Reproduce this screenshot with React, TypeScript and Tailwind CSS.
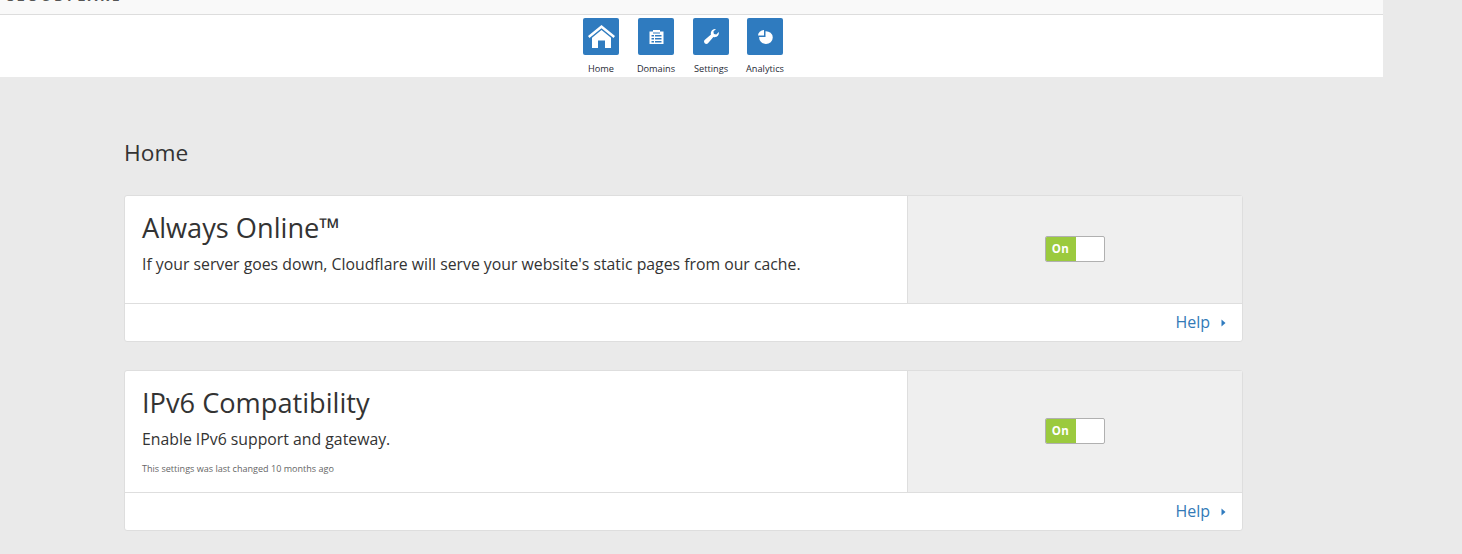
import React from "react";

const font = { fontFamily: '"Open Sans", "Liberation Sans", sans-serif' };

function Caret() {
  return (
    <svg width="5" height="8" viewBox="0 0 5 8" className="ml-[11px] mt-[1px]">
      <path d="M0.5 0.5 L4.5 4 L0.5 7.5 Z" fill="#2f7bbf" />
    </svg>
  );
}

function Toggle() {
  return (
    <div className="flex w-[60px] h-[26px] rounded-[2px] border border-[#b0b0b0] bg-white overflow-hidden">
      <div className="w-[31px] -ml-px -my-px h-[26px] pt-[1px] bg-[#9bca3e] text-white text-[11.5px] font-bold flex items-center justify-center tracking-[0.3px] rounded-l-[2px]">
        On
      </div>
    </div>
  );
}

function Card({ title, desc, note, mainH, toggleY }: { title: string; desc: string; note?: string; mainH: string; toggleY: string }) {
  return (
    <section className="w-[1119px] rounded-[3px] border border-[#dedede] bg-white">
      <div className={`flex ${mainH}`}>
        <div className="w-[783px] border-r border-[#dedede] pl-[17px] pt-[13px]">
          <h2 className="text-[27.2px] leading-[38px] text-[#333333]">{title}</h2>
          <p className="mt-[7px] text-[15.8px] leading-[20px] text-[#333333]">{desc}</p>
          {note && <p className="mt-[14px] text-[9.05px] leading-[12px] text-[#666666]">{note}</p>}
        </div>
        <div className={`flex-1 bg-[#efefef] flex items-center justify-center ${toggleY}`}>
          <Toggle />
        </div>
      </div>
      <div className="h-[38px] border-t border-[#dedede] flex items-center justify-end pr-[16px] text-[#337ab7]">
        <span className="text-[16px] leading-[20px] -mt-[1px]">Help</span>
        <Caret />
      </div>
    </section>
  );
}

function Nav({ label, w, children }: { label: string; w: string; children: React.ReactNode }) {
  return (
    <div className={`flex flex-col items-center ${w}`}>
      <div className="w-[36px] h-[37px] rounded-[2px] bg-[#2f7bbf] flex items-center justify-center">{children}</div>
      <span className="mt-[7px] text-[9.2px] leading-[13px] text-[#1f2a36] whitespace-nowrap">{label}</span>
    </div>
  );
}

export default function App() {
  return (
    <div style={font} className="w-[1462px] h-[554px] overflow-hidden bg-[#eaeaea]">
      <header className="w-[1383px] h-[77px] bg-white">
        <div className="h-[15px] bg-[#f9f9f9] border-b border-[#dddddd] overflow-hidden pl-[5px]">
          <div className="-mt-[11px] text-[14px] leading-[14px] font-bold tracking-[2.6px] text-[#555555]">CLOUDFLARE</div>
        </div>
        <nav className="flex justify-center pt-[3px] pr-[17px] h-[62px]">
          <Nav label="Home" w="w-[54px]">
            <svg width="27" height="23" viewBox="0 0 27 23" fill="white">
              <path d="M13.5 0 L27 11 L25.5 13 L13.5 3.2 L1.5 13 L0 11 Z" />
              <path d="M13.5 5 L23 12.8 V23 H17 V15.5 H10 V23 H4 V12.8 Z" />
            </svg>
          </Nav>
          <Nav label="Domains" w="w-[56px]">
            <svg width="15" height="14" viewBox="0 0 15 14">
              <path fill="white" d="M0.5 1.5 H4 V0 H11 V1.5 H14.5 V14 H0.5 Z" />
              <path fill="#2f7bbf" d="M4 2.6 H11 V3.4 H4 Z M2.5 5 H5 V6.5 H2.5 Z M6 5 H12.5 V6.5 H6 Z M2.5 8 H5 V9.5 H2.5 Z M6 8 H12.5 V9.5 H6 Z M2.5 11 H5 V12.5 H2.5 Z M6 11 H12.5 V12.5 H6 Z" />
            </svg>
          </Nav>
          <Nav label="Settings" w="w-[54px]">
            <svg width="15" height="15" viewBox="0 0 15 15" fill="white">
              <path d="M14.8 3 C15.3 5.4 13.7 7.8 11.2 8.1 C10.6 8.2 10 8.1 9.4 7.9 L4.2 14 C3.3 15.1 1.7 15.2 0.7 14.2 C-0.3 13.2 -0.2 11.6 0.9 10.8 L7 5.6 C6.8 5 6.7 4.2 6.9 3.5 C7.4 1.2 9.6 -0.4 12 0.1 L9.4 2.6 L9.9 5 L12.3 5.5 Z" />
            </svg>
          </Nav>
          <Nav label="Analytics" w="w-[54px]">
            <svg width="15" height="14" viewBox="0 0 15 14" fill="white">
              <path d="M7.5 1.2 A6.8 6.4 0 1 1 1.2 7 H7.5 Z" />
              <path d="M6 0 V5.6 H0 A6 5.6 0 0 1 6 0 Z" />
            </svg>
          </Nav>
        </nav>
      </header>
      <main className="pl-[124px] pt-[61px]">
        <h1 className="text-[22.7px] leading-[30px] text-[#333333]">Home</h1>
        <div className="mt-[27px] flex flex-col gap-[28px]">
          <Card
            title="Always Online™"
            desc="If your server goes down, Cloudflare will serve your website's static pages from our cache."
            mainH="h-[107px]"
            toggleY="pb-[2px]"
          />
          <Card
            title="IPv6 Compatibility"
            desc="Enable IPv6 support and gateway."
            note="This settings was last changed 10 months ago"
            mainH="h-[121px]"
            toggleY="pb-[2px]"
          />
        </div>
      </main>
    </div>
  );
}
